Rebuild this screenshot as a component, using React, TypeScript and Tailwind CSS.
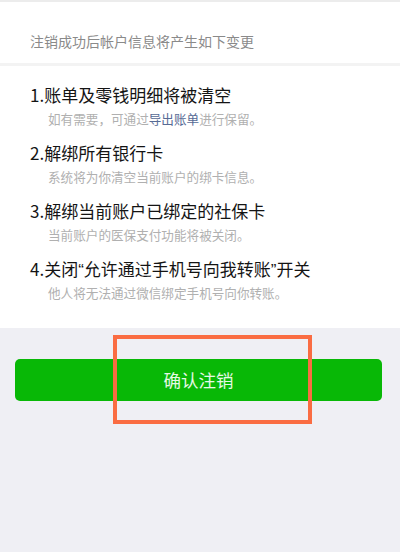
import React from "react";

const font = { fontFamily: '"Noto Sans CJK SC", "Noto Sans", sans-serif' };
const q = { fontFamily: '"Liberation Sans", Arial, sans-serif' };

const items: { title: React.ReactNode; sub: React.ReactNode }[] = [
  {
    title: "1.账单及零钱明细将被清空",
    sub: (
      <>
        如有需要，可通过<span className="text-[#576b95]">导出账单</span>进行保留。
      </>
    ),
  },
  { title: "2.解绑所有银行卡", sub: "系统将为你清空当前账户的绑卡信息。" },
  { title: "3.解绑当前账户已绑定的社保卡", sub: "当前账户的医保支付功能将被关闭。" },
  {
    title: (
      <>
        4.关闭<span style={q}>“</span>允许通过手机号向我转账<span style={q}>”</span>开关
      </>
    ),
    sub: "他人将无法通过微信绑定手机号向你转账。",
  },
];

export default function App() {
  return (
    <div className="w-[400px] h-[552px] bg-[#efeff4] flex flex-col overflow-hidden" style={font}>
      <div className="h-[2px] bg-[#ececec]" />
      <div className="bg-white px-[30px] pt-[29px] pb-[12px]">
        <div className="text-[14px] leading-[20px] text-[#8a8a8a]">注销成功后帐户信息将产生如下变更</div>
      </div>
      <div className="h-[3px] bg-[#f3f3f3]" />
      <div className="bg-white px-[30px] pt-[16px] pb-[24px] flex flex-col gap-[10px]">
        {items.map((it, i) => (
          <div key={i} className="flex flex-col">
            <div className="h-[26px] text-[17px] leading-[26px] text-[#141414] whitespace-nowrap">{it.title}</div>
            <div className="h-[22px] pl-[18px] text-[12.6px] leading-[22px] text-[#b0b0b0]">{it.sub}</div>
          </div>
        ))}
      </div>
      <div className="relative flex-1 px-[15px] pt-[31px]">
        <button className="w-[367px] h-[42px] rounded-[5px] bg-[#08b806] text-[17.5px] text-white/90 flex items-center justify-center">
          确认注销
        </button>
        <div className="absolute left-[113px] top-[7px] w-[199px] h-[89px] border-[4px] border-[#fa6c42]" />
      </div>
    </div>
  );
}
